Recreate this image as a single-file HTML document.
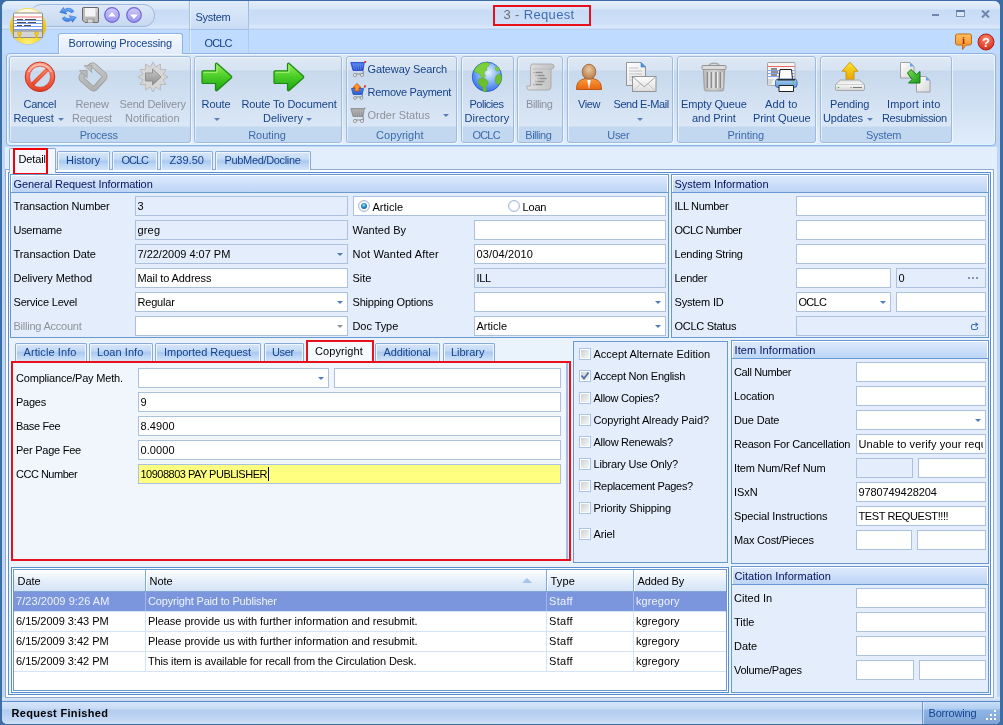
<!DOCTYPE html><html><head><meta charset="utf-8"><title>3 - Request</title><style>
*{box-sizing:border-box;margin:0;padding:0}
html,body{width:1003px;height:725px;overflow:hidden}
body{will-change:transform}
body{position:relative;background:#3b6ea5;font-family:"Liberation Sans",sans-serif;font-size:11px;color:#000;line-height:13px}
.a{position:absolute;white-space:nowrap}
.f{position:absolute;height:20px;border:1px solid #abc1de;background:#fff}
.d{background:#e3edfb}
.l{position:absolute;white-space:nowrap;line-height:13px}
.g{color:#8e939b}
.pn{position:absolute;border:1px solid #6a98d0;background:#e3edfb}
.ph{position:absolute;left:0;right:0;top:0;height:17px;border:1px solid #fff;border-bottom:0;background:linear-gradient(#dde9fb,#bcd5f6)}
.phl{position:absolute;left:0;right:0;top:17px;height:1px;background:#6a98d0}
.tb{position:absolute;border:1px solid #8caad6;border-bottom:0;border-radius:2px 2px 0 0;background:linear-gradient(#d9e7f9 0,#c2d9f5 40%,#a9c9f0 52%,#bfd8f6 75%,#d3e4f9 100%);box-shadow:inset 1px 1px 0 #eef5fd,inset -1px 0 0 #eef5fd}
.rg{position:absolute;top:56px;height:87px;border:1px solid #9ebbdf;border-radius:3px;background:linear-gradient(#dfe9f5 0,#d7e3f2 13px,#c8d9ed 14px,#dbe7f6 69px,#c1d8f0 70px,#c1d8f0 100%);box-shadow:inset 1px 1px 0 rgba(255,255,255,.55),1px 1px 0 rgba(255,255,255,.6)}
.rl{position:absolute;color:#3e6aaa;line-height:13px;white-space:nowrap}
.rb{position:absolute;color:#15428b;line-height:13px;white-space:nowrap}
.rbd{color:#8d9299}
.ar{position:absolute;width:0;height:0;border-left:3px solid transparent;border-right:3px solid transparent;border-top:3px solid #5b7fb6}
.cb{position:absolute;width:12px;height:12px;border:1px solid #a9c3e6;background:#fff;padding:1px}
.cb i{display:block;width:8px;height:8px;background:linear-gradient(135deg,#cdd2d9,#f6f6f6)}
.dd{position:absolute;width:0;height:0;border-left:3px solid transparent;border-right:3px solid transparent;border-top:3px solid #4d7ebd}
</style></head><body>
<div class="a" style="left:2px;top:1px;width:998px;height:723px;background:#bfd7f5;border-radius:6px 6px 5px 5px"></div>
<div class="a" style="left:2px;top:1px;width:998px;height:29px;border-radius:6px 6px 0 0;background:linear-gradient(#e6effb 0,#d6e5f8 8px,#c8dcf6 9px,#cddff7 22px,#dbe8fa 27px,#b4d0f2 28px)"></div>
<div class="a" style="left:2px;top:30px;width:998px;height:24px;background:#bfdbff"></div>
<div class="a" style="left:190px;top:1px;width:58px;height:28px;background:linear-gradient(#dfeafa,#c9dcf5)"></div>
<div class="a" style="left:189px;top:1px;width:1px;height:52px;background:linear-gradient(#9ab7de,#b4cff0)"></div>
<div class="a" style="left:248px;top:1px;width:1px;height:52px;background:linear-gradient(#9ab7de,#b4cff0)"></div>
<div class="a" style="left:190px;top:1px;width:1px;height:52px;background:rgba(255,255,255,.5)"></div>
<div class="a" style="left:190px;top:29px;width:58px;height:1px;background:#9fbde6"></div>
<div class="rb" style="left:195.50px;top:11px;letter-spacing:-0.281px">System</div>
<div class="rb" style="left:204.50px;top:37px;letter-spacing:-0.891px">OCLC</div>
<div class="a" style="left:503.50px;top:7px;letter-spacing:0.345px;font-size:13px;color:#3e6db5;line-height:15px"><span style="color:#707070">3 - </span>Request</div>
<div class="a" style="left:493px;top:5px;width:98px;height:21px;border:2px solid #e8101c"></div>
<div class="a" style="left:932px;top:14px;width:7px;height:2px;background:#6f87ad"></div>
<div class="a" style="left:956px;top:10px;width:9px;height:7px;border:1px solid #7a93bb;border-top:2px solid #5f789f;background:#dce8f8"></div>
<svg class="a" style="left:981px;top:10px" width="9" height="8" viewBox="0 0 9 8"><path d="M1 0.500L8 7.500M8 0.500L1 7.500" stroke="#6f87ad" stroke-width="2"/></svg>
<div class="a" style="left:30px;top:4px;width:125px;height:23px;border:1px solid #9fb9de;border-radius:11px;background:linear-gradient(#dde8f7,#c6d8f0)"></div>
<div class="a" style="left:9px;top:7px;width:38px;height:38px;border-radius:50%;background:linear-gradient(#dfe7f3,#b9c7dd)"></div>
<div class="a" style="left:10px;top:8px;width:36px;height:36px;border-radius:50%;background:radial-gradient(circle at 50% 100%,#fff27a 0,#f8d832 30%,#eec000 55%,#f3cf2a 75%,#fbe878 100%)"></div>
<div class="a" style="left:13px;top:9px;width:30px;height:17px;border-radius:15px 15px 9px 9px/13px 13px 5px 5px;background:linear-gradient(rgba(255,255,255,.95),rgba(255,255,255,.25))"></div>
<svg class="a" style="left:12px;top:12px" width="32" height="27" viewBox="0 0 32 27"><path d="M2.500 1h27a1 1 0 011 1v17h-29V2a1 1 0 011-1z" fill="#fdfdfd" stroke="#8d8d8d"/><path d="M2 5h28" stroke="#f07878"/><path d="M2 8.500h28M2 11.500h28M2 14.500h28M2 17.500h28" stroke="#7a9cf0"/><path d="M5 7.500h6M13 7.500h11M5 10.500h9M16 10.500h8M5 13.500h5M12 13.500h7" stroke="#505050" stroke-width="1.200"/><path d="M1.500 19h29v6.500h-29z" fill="#d4d4d4" stroke="#8d8d8d"/><path d="M7.500 26v-4M24.500 26v-4" stroke="#e8b800" stroke-width="2"/><circle cx="7.500" cy="21.500" r="1.800" fill="#f6d020" stroke="#c89800" stroke-width=".5"/><circle cx="24.500" cy="21.500" r="1.800" fill="#f6d020" stroke="#c89800" stroke-width=".5"/></svg>
<svg class="a" style="left:59px;top:6px" width="18" height="18" viewBox="0 0 18 18"><defs><linearGradient id="rf" x1="0" y1="0" x2="0" y2="1"><stop offset="0" stop-color="#7ab8ff"/><stop offset="1" stop-color="#2f78e0"/></linearGradient></defs><path d="M.8 6.300L4.500 1.500l.8 2.200C8.500 1.200 13 2 14.800 5.500l-2.600 1.300C10.800 4.800 8.300 4.600 6.300 6l1.500 2z" fill="url(#rf)" stroke="#2a66c4" stroke-width=".6"/><path d="M17.200 11.200l-3.700 5-.8-2.200c-3.200 2.400-7.700 1.700-9.500-1.800l2.600-1.300c1.400 2 3.900 2.200 5.900.8l-1.500-2z" fill="url(#rf)" stroke="#2a66c4" stroke-width=".6"/></svg>
<svg class="a" style="left:82px;top:7px" width="17" height="16" viewBox="0 0 17 16"><path d="M1.500.500h14a1 1 0 011 1v13a1 1 0 01-1 1H3l-2.500-2.500V1.500a1 1 0 011-1z" fill="#bdbdbd" stroke="#5a5a5a" stroke-width=".9"/><path d="M3 1h10.500v8.500H3z" fill="#f4f4f4"/><path d="M14.200 1.500v3" stroke="#e8e8e8" stroke-width="1"/><path d="M4.500 11.500h8v4h-8z" fill="#9c9c9c"/><path d="M6 12.500h4.500v3H6z" fill="#d8d8d8"/></svg>
<svg class="a" style="left:104px;top:7px" width="16" height="16" viewBox="0 0 16 16"><defs><linearGradient id="pc1" x1="0" y1="0" x2="0" y2="1"><stop offset="0" stop-color="#cfccfa"/><stop offset="1" stop-color="#9a92ea"/></linearGradient></defs><circle cx="8" cy="8" r="7.300" fill="url(#pc1)" stroke="#6e66d6" stroke-width="1.200"/><path d="M4.200 9.600L8 5l3.800 4.600z" fill="#fff"/></svg>
<svg class="a" style="left:126px;top:7px" width="16" height="16" viewBox="0 0 16 16"><defs><linearGradient id="pc0" x1="0" y1="0" x2="0" y2="1"><stop offset="0" stop-color="#cfccfa"/><stop offset="1" stop-color="#9a92ea"/></linearGradient></defs><circle cx="8" cy="8" r="7.300" fill="url(#pc0)" stroke="#6e66d6" stroke-width="1.200"/><path d="M4.200 7.500L8 12.100l3.800-4.600z" fill="#fff"/></svg>
<svg class="a" style="left:955px;top:33px" width="17" height="18" viewBox="0 0 17 18"><path d="M2.500 1h12a2 2 0 012 2v7a2 2 0 01-2 2h-3.500l-3.500 4.500V12h-5a2 2 0 01-2-2V3a2 2 0 012-2z" fill="url(#hg)" stroke="#c46a10"/><defs><linearGradient id="hg" x1="0" y1="0" x2="0" y2="1"><stop offset="0" stop-color="#ffc060"/><stop offset="1" stop-color="#f08a20"/></linearGradient></defs><text x="8.500" y="10.500" font-family="Liberation Serif,serif" font-weight="bold" font-size="11" text-anchor="middle" fill="#a83010">i</text></svg>
<svg class="a" style="left:977px;top:33px" width="18" height="18" viewBox="0 0 18 18"><defs><radialGradient id="qg" cx="50%" cy="30%" r="70%"><stop offset="0" stop-color="#ff8a70"/><stop offset="1" stop-color="#d82a18"/></radialGradient></defs><circle cx="9" cy="9" r="8" fill="url(#qg)" stroke="#b02414"/><text x="9" y="13.500" font-family="Liberation Sans,sans-serif" font-weight="bold" font-size="13" text-anchor="middle" fill="#fff">?</text></svg>
<div class="a" style="left:58px;top:33px;width:125px;height:21px;border:1px solid #8db2e3;border-bottom:0;border-radius:3px 3px 0 0;background:linear-gradient(#f4f8fd,#e1ebf9);box-shadow:inset 1px 1px 0 #fff"></div>
<div class="rb" style="left:68.50px;top:37px;letter-spacing:-0.175px">Borrowing Processing</div>
<div class="a" style="left:6px;top:53px;width:990px;height:93px;border:1px solid #8db2e3;border-radius:4px;background:linear-gradient(#dde8f6 0,#d4e2f3 16px,#c5d8ef 17px,#cfdff3 50px,#e1edfb 100%);box-shadow:inset 0 -1px 0 #dcf6ff,inset 1px 1px 0 #eef5fd,inset -1px 0 0 #eef5fd"></div>
<div class="a" style="left:59px;top:53px;width:123px;height:1px;background:#e1ebf9"></div>
<div class="a" style="left:10px;top:58px;width:58px;height:69px;background:linear-gradient(rgba(225,232,240,.35),rgba(205,214,224,.4) 20%,rgba(222,229,238,.4))"></div>
<div class="rg" style="left:9px;width:182px"></div>
<div class="rl" style="left:79.70px;top:129px;letter-spacing:-0.250px">Process</div>
<div class="rg" style="left:194px;width:148px"></div>
<div class="rl" style="left:248.20px;top:129px;letter-spacing:-0.046px">Routing</div>
<div class="rg" style="left:346px;width:111px"></div>
<div class="rl" style="left:376.10px;top:129px;letter-spacing:0.036px">Copyright</div>
<div class="rg" style="left:461px;width:53px"></div>
<div class="rl" style="left:472.40px;top:129px;letter-spacing:-0.791px">OCLC</div>
<div class="rg" style="left:517px;width:46px"></div>
<div class="rl" style="left:525.30px;top:129px;letter-spacing:-0.480px">Billing</div>
<div class="rg" style="left:567px;width:106px"></div>
<div class="rl" style="left:607.30px;top:129px;letter-spacing:-0.309px">User</div>
<div class="rg" style="left:677px;width:139px"></div>
<div class="rl" style="left:727.55px;top:129px;letter-spacing:-0.100px">Printing</div>
<div class="rg" style="left:820px;width:132px"></div>
<div class="rl" style="left:866.00px;top:129px;letter-spacing:-0.248px">System</div>
<div class="rb" style="left:23.50px;top:98px;letter-spacing:-0.275px">Cancel</div>
<div class="rb" style="left:13.50px;top:112px;letter-spacing:-0.112px">Request</div>
<div class="ar" style="left:58px;top:118px"></div>
<div class="rb rbd" style="left:75.50px;top:98px;letter-spacing:-0.210px">Renew</div>
<div class="rb rbd" style="left:72.00px;top:112px;letter-spacing:-0.141px">Request</div>
<div class="rb rbd" style="left:119.50px;top:98px;letter-spacing:-0.160px">Send Delivery</div>
<div class="rb rbd" style="left:125.00px;top:112px;letter-spacing:0.015px">Notification</div>
<div class="rb" style="left:201.50px;top:98px;letter-spacing:-0.052px">Route</div>
<div class="ar" style="left:214px;top:118px"></div>
<div class="rb" style="left:241.50px;top:98px;letter-spacing:-0.108px">Route To Document</div>
<div class="rb" style="left:263.00px;top:112px;letter-spacing:0.021px">Delivery</div>
<div class="ar" style="left:306px;top:118px"></div>
<div class="rb" style="left:469.50px;top:98px;letter-spacing:-0.501px">Policies</div>
<div class="rb" style="left:464.50px;top:112px;letter-spacing:0.087px">Directory</div>
<div class="rb rbd" style="left:526.00px;top:98px;letter-spacing:-0.408px">Billing</div>
<div class="rb" style="left:578.00px;top:98px;letter-spacing:-0.414px">View</div>
<div class="rb" style="left:613.50px;top:98px;letter-spacing:-0.429px">Send E-Mail</div>
<div class="ar" style="left:637px;top:118px"></div>
<div class="rb" style="left:681.00px;top:98px;letter-spacing:-0.133px">Empty Queue</div>
<div class="rb" style="left:692.00px;top:112px;letter-spacing:-0.026px">and Print</div>
<div class="rb" style="left:765.00px;top:98px;letter-spacing:0.131px">Add to</div>
<div class="rb" style="left:753.00px;top:112px;letter-spacing:-0.118px">Print Queue</div>
<div class="rb" style="left:830.00px;top:98px;letter-spacing:-0.182px">Pending</div>
<div class="rb" style="left:823.00px;top:112px;letter-spacing:-0.155px">Updates</div>
<div class="ar" style="left:867px;top:118px"></div>
<div class="rb" style="left:887.00px;top:98px;letter-spacing:0.130px">Import into</div>
<div class="rb" style="left:882.00px;top:112px;letter-spacing:-0.366px">Resubmission</div>
<div class="rb" style="left:367.50px;top:63px;letter-spacing:-0.123px">Gateway Search</div>
<div class="rb" style="left:367.50px;top:86px;letter-spacing:-0.281px">Remove Payment</div>
<div class="rb rbd" style="left:367.50px;top:109px;letter-spacing:0.003px">Order Status</div>
<div class="ar" style="left:443px;top:114px"></div>
<svg class="a" style="left:24px;top:61px" width="32" height="32" viewBox="0 0 32 32"><defs><linearGradient id="cg" x1="0" y1="0" x2="0" y2="32" gradientUnits="userSpaceOnUse"><stop offset="0" stop-color="#ffa890"/><stop offset=".5" stop-color="#f66a4e"/><stop offset="1" stop-color="#e03820"/></linearGradient></defs><circle cx="16" cy="15.800" r="12.700" fill="none" stroke="url(#cg)" stroke-width="4.400"/><path d="M7.600 24.200L24.400 7.400" stroke="url(#cg)" stroke-width="4.200"/><circle cx="16" cy="15.800" r="14.800" fill="none" stroke="#c22a1a" stroke-width=".9"/><path d="M9.800 23.600A10.500 10.500 0 018.200 22L22.200 8A10.500 10.500 0 0123.800 9.600z" fill="none" stroke="#cc3a28" stroke-width=".6"/><circle cx="16" cy="15.800" r="10.500" fill="none" stroke="#cc3a28" stroke-width=".6"/><path d="M4.500 11A12.700 12.700 0 0127.500 11" fill="none" stroke="#ffd0c0" stroke-width="1.400" opacity=".7"/></svg>
<svg class="a" style="left:76px;top:60px" width="34" height="34" viewBox="0 0 34 34"><defs><linearGradient id="rg1" x1="0" y1="0" x2="34" y2="34" gradientUnits="userSpaceOnUse"><stop offset="0" stop-color="#d2d2d2"/><stop offset="1" stop-color="#a6a6a6"/></linearGradient></defs><g transform="rotate(42 17 17)"><path d="M8 14V10.500A2.500 2.500 0 0110.500 8H23.500A2.500 2.500 0 0126 10.500V23.500A2.500 2.500 0 0123.500 26H10.500A2.500 2.500 0 018 23.500V21" fill="none" stroke="#9a9a9a" stroke-width="5.600" stroke-linejoin="round"/><path d="M8 14V10.500A2.500 2.500 0 0110.500 8H23.500A2.500 2.500 0 0126 10.500V23.500A2.500 2.500 0 0123.500 26H10.500A2.500 2.500 0 018 23.500V21" fill="none" stroke="url(#rg1)" stroke-width="4.200" stroke-linejoin="round"/><path d="M2.800 21.500h10.400L8 15.800z" fill="#b8b8b8" stroke="#9a9a9a" stroke-width=".7"/><path d="M2.800 14.800h10.400L8 9z" fill="#bdbdbd" stroke="#9a9a9a" stroke-width=".7"/><path d="M2.500 15.300h11" stroke="#d3e1f2" stroke-width=".9"/></g></svg>
<svg class="a" style="left:137px;top:61px" width="32" height="32" viewBox="0 0 32 32"><defs><linearGradient id="sg" x1="0" y1="8" x2="0" y2="24" gradientUnits="userSpaceOnUse"><stop offset="0" stop-color="#c8c8c8"/><stop offset="1" stop-color="#8e8e8e"/></linearGradient></defs><polygon points="16.0,1.0 18.7,5.9 23.5,3.0 23.4,8.6 29.0,8.5 26.1,13.3 31.0,16.0 26.1,18.7 29.0,23.5 23.4,23.4 23.5,29.0 18.7,26.1 16.0,31.0 13.3,26.1 8.5,29.0 8.6,23.4 3.0,23.5 5.9,18.7 1.0,16.0 5.9,13.3 3.0,8.5 8.6,8.6 8.5,3.0 13.3,5.9" fill="#d6d6d6" stroke="#b4b4b4" stroke-width=".8"/><path d="M8.500 12h7V8l8.500 8-8.500 8v-4h-7z" fill="url(#sg)" stroke="#8a8a8a" stroke-width=".9"/></svg>
<svg class="a" style="left:201px;top:62px" width="33" height="30" viewBox="0 0 33 30"><defs><linearGradient id="ga0" x1="0" y1="0" x2="0" y2="30" gradientUnits="userSpaceOnUse"><stop offset="0" stop-color="#9cf060"/><stop offset=".45" stop-color="#4fd02a"/><stop offset="1" stop-color="#18a010"/></linearGradient></defs><path d="M2 8.800h12.500V2.200a1 1 0 011.700-.7L30.500 14.300a1 1 0 010 1.400L16.200 28.500a1 1 0 01-1.700-.7V21.500H2a1 1 0 01-1-1V9.800a1 1 0 011-1z" fill="url(#ga0)" stroke="#1c8a12" stroke-width="1.200"/><path d="M2.500 10.300h13.500V3.800" fill="none" stroke="#b8f58a" stroke-width="1" opacity=".8"/></svg>
<svg class="a" style="left:273px;top:62px" width="33" height="30" viewBox="0 0 33 30"><defs><linearGradient id="ga1" x1="0" y1="0" x2="0" y2="30" gradientUnits="userSpaceOnUse"><stop offset="0" stop-color="#9cf060"/><stop offset=".45" stop-color="#4fd02a"/><stop offset="1" stop-color="#18a010"/></linearGradient></defs><path d="M2 8.800h12.500V2.200a1 1 0 011.700-.7L30.500 14.300a1 1 0 010 1.400L16.200 28.500a1 1 0 01-1.700-.7V21.500H2a1 1 0 01-1-1V9.800a1 1 0 011-1z" fill="url(#ga1)" stroke="#1c8a12" stroke-width="1.200"/><path d="M2.500 10.300h13.500V3.800" fill="none" stroke="#b8f58a" stroke-width="1" opacity=".8"/></svg>
<svg class="a" style="left:350px;top:61px" width="17" height="17" viewBox="0 0 17 17"><defs><linearGradient id="ct0" x1="0" y1="0" x2="0" y2="10" gradientUnits="userSpaceOnUse"><stop offset="0" stop-color="#5a8cf0"/><stop offset="1" stop-color="#2040c8"/></linearGradient></defs><path d="M.8 1.500h13.500l-1.300 8H3z" fill="url(#ct0)" stroke="#2040c8" stroke-width=".8"/><path d="M14.300 1.500l1.200-.8M13.300 9.500v3.500H4.500" fill="none" stroke="#8c8c8c" stroke-width="1.100"/><circle cx="5" cy="14" r="1.600" fill="#e6e6e6" stroke="#8c8c8c" stroke-width=".8"/><circle cx="12" cy="14" r="1.600" fill="#e6e6e6" stroke="#8c8c8c" stroke-width=".8"/><path d="M3 4h10M3.300 6h9.400M3.600 8h8.800" stroke="#9cc4ff" stroke-width=".7" stroke-dasharray="1.200 1"/><circle cx="15.300" cy=".9" r="1" fill="#d82818"/></svg>
<svg class="a" style="left:350px;top:83px" width="17" height="17" viewBox="0 0 17 17"><defs><linearGradient id="ct1" x1="0" y1="0" x2="0" y2="12" gradientUnits="userSpaceOnUse"><stop offset="0" stop-color="#6aa8f8"/><stop offset="1" stop-color="#2458d0"/></linearGradient></defs><path d="M1.500 5.500h12l-1.300 6H3.200z" fill="url(#ct1)" stroke="#2050c0" stroke-width=".8"/><path d="M13.500 5.500l1.200-1.500M12.400 11.500v2.500H4.500" fill="none" stroke="#8c8c8c" stroke-width="1.100"/><circle cx="5" cy="15" r="1.400" fill="#e6e6e6" stroke="#8c8c8c" stroke-width=".8"/><circle cx="11.500" cy="15" r="1.400" fill="#e6e6e6" stroke="#8c8c8c" stroke-width=".8"/><path d="M7 .5l4 4H9v3.500H5V4.500H3z" fill="#ff9a20" stroke="#d04810" stroke-width=".8"/><circle cx="15" cy="3.300" r="1.100" fill="#d82818"/></svg>
<svg class="a" style="left:350px;top:107px" width="17" height="17" viewBox="0 0 17 17"><defs><linearGradient id="ct2" x1="0" y1="0" x2="0" y2="10" gradientUnits="userSpaceOnUse"><stop offset="0" stop-color="#b4b4b4"/><stop offset="1" stop-color="#8a8a8a"/></linearGradient></defs><path d="M.8 1.500h13.500l-1.300 8H3z" fill="url(#ct2)" stroke="#8a8a8a" stroke-width=".8"/><path d="M14.300 1.500l1.200-.8M13.300 9.500v3.500H4.500" fill="none" stroke="#8c8c8c" stroke-width="1.100"/><circle cx="5" cy="14" r="1.600" fill="#e6e6e6" stroke="#8c8c8c" stroke-width=".8"/><circle cx="12" cy="14" r="1.600" fill="#e6e6e6" stroke="#8c8c8c" stroke-width=".8"/><path d="M3 4h10M3.300 6h9.400M3.600 8h8.800" stroke="#d0d0d0" stroke-width=".7" stroke-dasharray="1.200 1"/></svg>
<svg class="a" style="left:471px;top:61px" width="32" height="32" viewBox="0 0 32 32"><defs><radialGradient id="gl" cx="55%" cy="35%" r="70%"><stop offset="0" stop-color="#e8f2ff"/><stop offset=".45" stop-color="#8ab8f8"/><stop offset="1" stop-color="#2e6ae0"/></radialGradient></defs><circle cx="16" cy="15.800" r="14.700" fill="url(#gl)" stroke="#2a5fd0" stroke-width=".9"/><path d="M3.500 9C6 4.500 10 2 14.500 1.500l4.500.8-1.500 3-2 1 .5 3-2 .5-1 3 1.500 2.500-1.500 1.500-2.500-.5-2-3.500L6.500 12 4 11z" fill="#7ed03a" stroke="#5cb020" stroke-width=".5"/><path d="M8 18c2-1.500 5-1 7 .500 2 1 2.500 3 1.500 5l-1.500 2 .5 4.800c-1.200.3-2.500.2-3.500-.2L12 26c-2.500-.5-4.500-2.500-4.800-5z" fill="#6cc030" stroke="#54a41c" stroke-width=".5"/><path d="M26.500 5.500l2 3-1.500 2-2.500-1.500-.5-2.500z" fill="#7ed03a" stroke="#5cb020" stroke-width=".5"/><path d="M27 13.500c2-.8 3.200 0 3.600 1.500.2 3-.6 6-2.200 8.500-2 .5-3.500-1-4-3.500-.5-3 .5-5.500 2.600-6.500z" fill="#6cc030" stroke="#54a41c" stroke-width=".5"/></svg>
<svg class="a" style="left:525px;top:63px" width="30" height="28" viewBox="0 0 30 28"><defs><linearGradient id="sc" x1="0" y1="0" x2="30" y2="0" gradientUnits="userSpaceOnUse"><stop offset="0" stop-color="#e4e4e4"/><stop offset=".5" stop-color="#d0d0d0"/><stop offset="1" stop-color="#c0c0c0"/></linearGradient></defs><path d="M7 1h19.500a2.500 2.500 0 010 5H26v18a3 3 0 01-3 3H4.500a2.500 2.500 0 01-2.500-2.500V23h3.500V3.500A2.500 2.500 0 017 1z" fill="url(#sc)" stroke="#a8a8a8" stroke-width=".9"/><path d="M8 6h18" stroke="#b8b8b8" stroke-width=".8"/><path d="M10.500 9.500h7M12.500 12.500h7M14.500 15.500h7M12.500 18.500h7M10.500 21.500h7" stroke="#8e8e8e" stroke-width="1.300"/><path d="M8.500 9.500h1M10.500 12.500h1M12.500 15.500h1M10.500 18.500h1M8.500 21.500h1" stroke="#8e8e8e" stroke-width="1.300"/></svg>
<svg class="a" style="left:575px;top:63px" width="28" height="28" viewBox="0 0 28 28"><defs><linearGradient id="ub" x1="0" y1="14" x2="0" y2="27" gradientUnits="userSpaceOnUse"><stop offset="0" stop-color="#ffa040"/><stop offset="1" stop-color="#e8640c"/></linearGradient><radialGradient id="uh" cx="50%" cy="35%" r="65%"><stop offset="0" stop-color="#e8c89c"/><stop offset="1" stop-color="#b87848"/></radialGradient></defs><path d="M1.500 26.500c0-6 2-9 7-10.500l5.500-1.500 5.500 1.500c5 1.500 7 4.500 7 10.500z" fill="url(#ub)" stroke="#b4500c" stroke-width=".9"/><path d="M12 15.500l2 10 2-10z" fill="#fff" stroke="#c8c8c8" stroke-width=".4"/><ellipse cx="14" cy="8.800" rx="6.800" ry="7.600" fill="url(#uh)" stroke="#9c5c30" stroke-width=".8"/></svg>
<svg class="a" style="left:626px;top:62px" width="31" height="31" viewBox="0 0 31 31"><defs><linearGradient id="dc" x1="0" y1="0" x2="20" y2="24" gradientUnits="userSpaceOnUse"><stop offset="0" stop-color="#fff"/><stop offset="1" stop-color="#e0e0e0"/></linearGradient><linearGradient id="ev" x1="0" y1="14" x2="0" y2="30" gradientUnits="userSpaceOnUse"><stop offset="0" stop-color="#fff"/><stop offset="1" stop-color="#dcdcdc"/></linearGradient></defs><path d="M.5.500h14.500l4.500 4.500v18.500H.5z" fill="url(#dc)" stroke="#8c8c8c" stroke-width=".9"/><path d="M15 .5l4.500 4.500H15z" fill="#4a9af0" stroke="#2a6ac8" stroke-width=".5"/><path d="M3 6h9M3 9h13M3 12h13M3 15h4M3 18h3" stroke="#c4c4c4" stroke-width="1.200"/><rect x="6.500" y="14.500" width="23.500" height="15" fill="url(#ev)" stroke="#8c8c8c" stroke-width=".9"/><path d="M6.800 14.800l11.500 10 11.500-10" fill="none" stroke="#9a9a9a" stroke-width=".9"/><path d="M6.800 29.200l8.500-8M29.700 29.200l-8.500-8" stroke="#c0c0c0" stroke-width=".7"/></svg>
<svg class="a" style="left:701px;top:61px" width="26" height="31" viewBox="0 0 26 31"><defs><linearGradient id="tr" x1="0" y1="0" x2="26" y2="0" gradientUnits="userSpaceOnUse"><stop offset="0" stop-color="#b4b4b4"/><stop offset=".5" stop-color="#d4d4d4"/><stop offset="1" stop-color="#a8a8a8"/></linearGradient></defs><path d="M8 4.500c0-3 10-3 10 0" fill="none" stroke="#a8a8a8" stroke-width="1.300"/><rect x="1" y="4.500" width="24" height="4" rx="1" fill="#dcdcdc" stroke="#8a8a8a" stroke-width=".9"/><path d="M2.300 8.500h21.400l-1 20a1.500 1.500 0 01-1.500 1.400H4.800a1.500 1.500 0 01-1.500-1.400z" fill="url(#tr)" stroke="#9a9a9a" stroke-width=".9"/><path d="M6.500 11v16M10.500 11v16M15 11v16M19.500 11v16" stroke="#8c8c8c" stroke-width="1.600"/><path d="M8 11v16M12 11v16M16.500 11v16M21 11v16" stroke="#f0f0f0" stroke-width="1"/></svg>
<svg class="a" style="left:767px;top:62px" width="31" height="31" viewBox="0 0 31 31"><defs><linearGradient id="pr" x1="0" y1="17" x2="0" y2="26" gradientUnits="userSpaceOnUse"><stop offset="0" stop-color="#a8d0f4"/><stop offset="1" stop-color="#5a94d8"/></linearGradient></defs><path d="M1.500.500h25.500a1 1 0 011 1v21a1 1 0 01-1 1H1.500a1 1 0 01-1-1v-21a1 1 0 011-1z" fill="#f4f4f4" stroke="#9a9a9a" stroke-width=".9"/><path d="M1 4.500h26.500" stroke="#f06a6a" stroke-width="1"/><path d="M1 8.500h26.500M1 11.500h26.500M1 14.500h26.500" stroke="#7a9cf0" stroke-width=".9"/><path d="M4 7h6M4 10h7M4 13h6" stroke="#6a6a6a" stroke-width="1.300"/><path d="M1 17h7c-2.500 1.500-3.500 3.500-3.500 6.500H1z" fill="#d8d8d8"/><path d="M13 7.500h11.500l1 10H12z" fill="#fcfcfc" stroke="#222" stroke-width="1"/><rect x="8.500" y="17" width="21.500" height="8.500" rx="2.500" fill="url(#pr)" stroke="#3a6aa8" stroke-width=".9"/><path d="M10.500 17.800h17.500" stroke="#222" stroke-width="1.400"/><path d="M12 23.500h14.500v6H12z" fill="#fcfcfc" stroke="#222" stroke-width="1"/><circle cx="26.500" cy="20.300" r=".8" fill="#3ad020"/></svg>
<svg class="a" style="left:834px;top:61px" width="32" height="31" viewBox="0 0 32 31"><defs><linearGradient id="ya" x1="0" y1="0" x2="0" y2="19" gradientUnits="userSpaceOnUse"><stop offset="0" stop-color="#ffe830"/><stop offset="1" stop-color="#e8a400"/></linearGradient><linearGradient id="dv" x1="0" y1="19" x2="0" y2="30" gradientUnits="userSpaceOnUse"><stop offset="0" stop-color="#e0e0e0"/><stop offset=".4" stop-color="#fafafa"/><stop offset="1" stop-color="#d0d0d0"/></linearGradient></defs><path d="M16 1.200l8 9h-4v8h-8v-8H8z" fill="url(#ya)" stroke="#c89400" stroke-width=".9" stroke-linejoin="round"/><path d="M6.500 19h19l5 4.500v4.500a1.500 1.500 0 01-1.500 1.500H3a1.500 1.500 0 01-1.500-1.500V23.500z" fill="url(#dv)" stroke="#a4a4a4" stroke-width=".9"/><path d="M1.800 23.500h28.400" stroke="#c4c4c4" stroke-width=".8"/><circle cx="4.500" cy="26.500" r=".8" fill="#3ac020"/><path d="M16.500 26.500h1M19 26.500h9" stroke="#7a7a7a" stroke-width="1"/></svg>
<svg class="a" style="left:899px;top:61px" width="32" height="32" viewBox="0 0 32 32"><defs><linearGradient id="d1" x1="0" y1="0" x2="16" y2="16" gradientUnits="objectBoundingBox"><stop offset="0" stop-color="#fff"/><stop offset=".06" stop-color="#d8d8d8"/></linearGradient><linearGradient id="gi" x1="8" y1="8" x2="21" y2="22" gradientUnits="userSpaceOnUse"><stop offset="0" stop-color="#7ce050"/><stop offset="1" stop-color="#1c9a1c"/></linearGradient></defs><path d="M1.500 1.500h9.500l4 4v11.500H1.500z" fill="url(#d1)" stroke="#9a9a9a" stroke-width=".9"/><path d="M11 1.500l4 4h-4z" fill="#5aa4f0"/><path d="M17.500 15.500h9.500l4 4v11.500H17.500z" fill="url(#d1)" stroke="#9a9a9a" stroke-width=".9"/><path d="M27 15.500l4 4h-4z" fill="#5aa4f0"/><path d="M8.500 12l3.500-3.500 5.500 5 3.500-3v11.500H9.500l3.500-3.500z" fill="url(#gi)" stroke="#14781a" stroke-width="1" stroke-linejoin="round"/></svg>
<div class="a" style="left:5px;top:147px;width:992px;height:554px;background:#e3eefc"></div>
<div class="a" style="left:2px;top:697px;width:998px;height:4px;background:linear-gradient(#e3eefc,#c4d8f3)"></div>
<div class="a" style="left:5px;top:169px;width:989px;height:529px;border:1px solid #93a9cc;background:#fbfdff"></div>
<div class="a" style="left:8px;top:172px;width:983px;height:523px;border:1px solid #5b8ed0;background:#eaf2fc"></div>
<div class="tb" style="left:57px;top:151px;width:53px;height:19px"></div>
<div class="l" style="left:66.00px;top:154px;letter-spacing:-0.005px;color:#15428b">History</div>
<div class="tb" style="left:112px;top:151px;width:46px;height:19px"></div>
<div class="l" style="left:121.50px;top:154px;letter-spacing:-1.000px;color:#15428b">OCLC</div>
<div class="tb" style="left:160px;top:151px;width:53px;height:19px"></div>
<div class="l" style="left:169.50px;top:154px;letter-spacing:0.042px;color:#15428b">Z39.50</div>
<div class="tb" style="left:215px;top:151px;width:96px;height:19px"></div>
<div class="l" style="left:224.50px;top:154px;letter-spacing:-0.337px;color:#15428b">PubMed/Docline</div>
<div class="a" style="left:9px;top:148px;width:47px;height:25px;border:1px solid #8caad6;border-bottom:0;background:#f4f8fe;border-radius:2px 2px 0 0"></div>
<div class="l" style="left:18.50px;top:153px;letter-spacing:-0.121px">Detail</div>
<div class="a" style="left:13px;top:148px;width:35px;height:27px;border:2px solid #f00008"></div>
<div class="pn" style="left:10px;top:174px;width:659px;height:164px"><div class="ph"></div><div class="phl"></div></div>
<div class="l" style="left:13.50px;top:178px;letter-spacing:-0.076px;color:#06125f">General Request Information</div>
<div class="l" style="left:13.50px;top:200px;letter-spacing:-0.181px">Transaction Number</div>
<div class="l" style="left:13.50px;top:224px;letter-spacing:-0.306px">Username</div>
<div class="l" style="left:13.50px;top:248px;letter-spacing:-0.060px">Transaction Date</div>
<div class="l" style="left:13.50px;top:272px;letter-spacing:-0.066px">Delivery Method</div>
<div class="l" style="left:13.50px;top:296px;letter-spacing:-0.188px">Service Level</div>
<div class="l g" style="left:13.50px;top:320px;letter-spacing:-0.236px">Billing Account</div>
<div class="f d" style="left:135px;top:196px;width:213px"></div>
<div class="l" style="left:137.50px;top:200px">3</div>
<div class="f d" style="left:135px;top:220px;width:213px"></div>
<div class="l" style="left:137.50px;top:224px;letter-spacing:0.167px">greg</div>
<div class="f d" style="left:135px;top:244px;width:213px"></div>
<div class="l" style="left:137.50px;top:248px;letter-spacing:-0.010px">7/22/2009 4:07 PM</div>
<div class="dd" style="left:337px;top:253px;border-top-color:#4d7ebd"></div>
<div class="f" style="left:135px;top:268px;width:213px"></div>
<div class="l" style="left:137.50px;top:272px;letter-spacing:-0.094px">Mail to Address</div>
<div class="f" style="left:135px;top:292px;width:213px"></div>
<div class="l" style="left:137.50px;top:296px;letter-spacing:-0.190px">Regular</div>
<div class="dd" style="left:337px;top:301px;border-top-color:#4d7ebd"></div>
<div class="f" style="left:135px;top:316px;width:213px"></div>
<div class="dd" style="left:337px;top:325px;border-top-color:#8e939b"></div>
<div class="f" style="left:353px;top:196px;width:313px"></div>
<div class="a" style="left:358px;top:200px;width:12px;height:12px;border-radius:50%;border:1px solid #a9bbdc;background:radial-gradient(circle at 50% 50%,#fff 55%,#dde6f4 70%,#fff 100%)"></div>
<div class="a" style="left:361px;top:203px;width:6px;height:6px;border-radius:50%;background:radial-gradient(circle at 45% 35%,#b4e8fa 0,#2a8ccc 40%,#0c4c88 100%)"></div>
<div class="l" style="left:372.50px;top:201px;letter-spacing:-0.009px">Article</div>
<div class="a" style="left:508px;top:200px;width:12px;height:12px;border-radius:50%;border:1px solid #a9bbdc;background:radial-gradient(circle at 50% 50%,#fff 55%,#dde6f4 70%,#fff 100%)"></div>
<div class="l" style="left:522.50px;top:201px;letter-spacing:-0.171px">Loan</div>
<div class="l" style="left:352.50px;top:224px;letter-spacing:0.010px">Wanted By</div>
<div class="l" style="left:352.50px;top:248px;letter-spacing:0.184px">Not Wanted After</div>
<div class="l" style="left:352.50px;top:272px;letter-spacing:-0.067px">Site</div>
<div class="l" style="left:352.50px;top:296px;letter-spacing:-0.205px">Shipping Options</div>
<div class="l" style="left:352.50px;top:320px;letter-spacing:-0.073px">Doc Type</div>
<div class="f" style="left:474px;top:220px;width:192px"></div>
<div class="f" style="left:474px;top:244px;width:192px"></div>
<div class="l" style="left:476.50px;top:248px;letter-spacing:0.154px">03/04/2010</div>
<div class="f d" style="left:474px;top:268px;width:192px"></div>
<div class="l" style="left:476.50px;top:272px;letter-spacing:-0.366px">ILL</div>
<div class="f" style="left:474px;top:292px;width:192px"></div>
<div class="dd" style="left:655px;top:301px;border-top-color:#4d7ebd"></div>
<div class="f" style="left:474px;top:316px;width:192px"></div>
<div class="l" style="left:476.50px;top:320px;letter-spacing:-0.009px">Article</div>
<div class="dd" style="left:655px;top:325px;border-top-color:#4d7ebd"></div>
<div class="pn" style="left:671px;top:174px;width:318px;height:164px"><div class="ph"></div><div class="phl"></div></div>
<div class="l" style="left:674.50px;top:178px;letter-spacing:-0.043px;color:#06125f">System Information</div>
<div class="l" style="left:674.50px;top:200px;letter-spacing:-0.336px">ILL Number</div>
<div class="l" style="left:674.50px;top:224px;letter-spacing:-0.541px">OCLC Number</div>
<div class="l" style="left:674.50px;top:248px;letter-spacing:-0.190px">Lending String</div>
<div class="l" style="left:674.50px;top:272px;letter-spacing:-0.278px">Lender</div>
<div class="l" style="left:674.50px;top:296px;letter-spacing:-0.193px">System ID</div>
<div class="l" style="left:674.50px;top:320px;letter-spacing:-0.292px">OCLC Status</div>
<div class="f" style="left:796px;top:196px;width:190px"></div>
<div class="f" style="left:796px;top:220px;width:190px"></div>
<div class="f" style="left:796px;top:244px;width:190px"></div>
<div class="f" style="left:796px;top:268px;width:95px"></div>
<div class="f d" style="left:896px;top:268px;width:90px"></div>
<div class="l" style="left:898.50px;top:272px">0</div>
<div class="a" style="left:968px;top:277px;width:2px;height:2px;background:#8094b4;box-shadow:4px 0 #8094b4,8px 0 #8094b4"></div>
<div class="f" style="left:796px;top:292px;width:95px"></div>
<div class="l" style="left:798.50px;top:296px;letter-spacing:-0.716px">OCLC</div>
<div class="dd" style="left:880px;top:301px;border-top-color:#4d7ebd"></div>
<div class="f" style="left:896px;top:292px;width:90px"></div>
<div class="f d" style="left:796px;top:316px;width:190px"></div>
<svg class="a" style="left:970px;top:321px" width="10" height="10" viewBox="0 0 10 10"><path d="M5.500 3.500H3a1.500 1.500 0 00-1.500 1.500v2A1.500 1.500 0 003 8.500h3A1.500 1.500 0 007.500 7V6" fill="none" stroke="#3a6fc0" stroke-width="1.100"/><path d="M5.500 1l3 2.500-3 2.500z" fill="#3a6fc0"/></svg>
<div class="a" style="left:12px;top:361px;width:556px;height:200px;border:1px solid #a3b9dc;background:#f1f6fd;box-shadow:inset -1px -1px 0 #a9bfe0"></div>
<div class="tb" style="left:15px;top:343px;width:72px;height:18px"></div>
<div class="l" style="left:23.50px;top:346px;letter-spacing:0.086px;color:#15428b">Article Info</div>
<div class="tb" style="left:89px;top:343px;width:64px;height:18px"></div>
<div class="l" style="left:97.00px;top:346px;letter-spacing:0.058px;color:#15428b">Loan Info</div>
<div class="tb" style="left:155px;top:343px;width:106px;height:18px"></div>
<div class="l" style="left:164.00px;top:346px;letter-spacing:-0.021px;color:#15428b">Imported Request</div>
<div class="tb" style="left:264px;top:343px;width:40px;height:18px"></div>
<div class="l" style="left:272.00px;top:346px;letter-spacing:-0.359px;color:#15428b">User</div>
<div class="tb" style="left:375px;top:343px;width:65px;height:18px"></div>
<div class="l" style="left:383.50px;top:346px;letter-spacing:-0.113px;color:#15428b">Additional</div>
<div class="tb" style="left:443px;top:343px;width:52px;height:18px"></div>
<div class="l" style="left:451.00px;top:346px;letter-spacing:-0.032px;color:#15428b">Library</div>
<div class="a" style="left:307px;top:341px;width:66px;height:22px;background:#f6f9fe"></div>
<div class="l" style="left:315.00px;top:345px;letter-spacing:0.091px">Copyright</div>
<div class="a" style="left:306px;top:340px;width:68px;height:23px;border:2px solid #e8101c"></div>
<div class="a" style="left:11px;top:361px;width:560px;height:200px;border:2px solid #e8101c"></div>
<div class="l" style="left:16.00px;top:372px;letter-spacing:-0.194px">Compliance/Pay Meth.</div>
<div class="l" style="left:16.00px;top:396px;letter-spacing:-0.261px">Pages</div>
<div class="l" style="left:16.00px;top:420px;letter-spacing:-0.349px">Base Fee</div>
<div class="l" style="left:16.00px;top:444px;letter-spacing:-0.248px">Per Page Fee</div>
<div class="l" style="left:16.00px;top:468px;letter-spacing:-0.492px">CCC Number</div>
<div class="f" style="left:138px;top:368px;width:191px"></div>
<div class="dd" style="left:318px;top:377px;border-top-color:#4d7ebd"></div>
<div class="f" style="left:334px;top:368px;width:227px"></div>
<div class="f" style="left:138px;top:392px;width:423px"></div>
<div class="l" style="left:140.50px;top:396px">9</div>
<div class="f" style="left:138px;top:416px;width:423px"></div>
<div class="l" style="left:140.50px;top:420px;letter-spacing:0.091px">8.4900</div>
<div class="f" style="left:138px;top:440px;width:423px"></div>
<div class="l" style="left:140.50px;top:444px;letter-spacing:0.091px">0.0000</div>
<div class="f" style="left:138px;top:464px;width:423px;background:#ffff80"></div>
<div class="l" style="left:140.50px;top:468px;letter-spacing:-0.509px">10908803 PAY PUBLISHER</div>
<div class="a" style="left:268px;top:467px;width:1px;height:14px;background:#000"></div>
<div class="a" style="left:573px;top:341px;width:155px;height:222px;border:1px solid #6a98d0;background:#e3edfb"></div>
<div class="cb" style="left:579px;top:348px"><i></i></div>
<div class="l" style="left:593.50px;top:348px;letter-spacing:-0.008px">Accept Alternate Edition</div>
<div class="cb" style="left:579px;top:370px"><i></i></div>
<svg class="a" style="left:580px;top:371px" width="10" height="10" viewBox="0 0 10 10"><path d="M1.500 4.500l2.500 3L8.500 1.500" fill="none" stroke="#5272a6" stroke-width="1.900"/></svg>
<div class="l" style="left:593.50px;top:370px;letter-spacing:-0.239px">Accept Non English</div>
<div class="cb" style="left:579px;top:392px"><i></i></div>
<div class="l" style="left:593.50px;top:392px;letter-spacing:-0.308px">Allow Copies?</div>
<div class="cb" style="left:579px;top:414px"><i></i></div>
<div class="l" style="left:593.50px;top:414px;letter-spacing:-0.114px">Copyright Already Paid?</div>
<div class="cb" style="left:579px;top:436px"><i></i></div>
<div class="l" style="left:593.50px;top:436px;letter-spacing:-0.291px">Allow Renewals?</div>
<div class="cb" style="left:579px;top:458px"><i></i></div>
<div class="l" style="left:593.50px;top:458px;letter-spacing:-0.215px">Library Use Only?</div>
<div class="cb" style="left:579px;top:480px"><i></i></div>
<div class="l" style="left:593.50px;top:480px;letter-spacing:-0.322px">Replacement Pages?</div>
<div class="cb" style="left:579px;top:502px"><i></i></div>
<div class="l" style="left:593.50px;top:502px;letter-spacing:-0.158px">Priority Shipping</div>
<div class="cb" style="left:579px;top:528px"><i></i></div>
<div class="l" style="left:593.50px;top:528px;letter-spacing:-0.123px">Ariel</div>
<div class="pn" style="left:731px;top:340px;width:258px;height:224px"><div class="ph"></div><div class="phl"></div></div>
<div class="l" style="left:734.50px;top:344px;letter-spacing:0.095px;color:#06125f">Item Information</div>
<div class="l" style="left:734.00px;top:366px;letter-spacing:-0.376px">Call Number</div>
<div class="l" style="left:734.00px;top:390px;letter-spacing:-0.162px">Location</div>
<div class="l" style="left:734.00px;top:414px;letter-spacing:-0.148px">Due Date</div>
<div class="l" style="left:734.00px;top:438px;letter-spacing:-0.208px">Reason For Cancellation</div>
<div class="l" style="left:734.00px;top:462px;letter-spacing:-0.165px">Item Num/Ref Num</div>
<div class="l" style="left:734.00px;top:486px;letter-spacing:-0.036px">ISxN</div>
<div class="l" style="left:734.00px;top:510px;letter-spacing:-0.095px">Special Instructions</div>
<div class="l" style="left:734.00px;top:534px;letter-spacing:-0.182px">Max Cost/Pieces</div>
<div class="f" style="left:856px;top:362px;width:130px"></div>
<div class="f" style="left:856px;top:386px;width:130px"></div>
<div class="f" style="left:856px;top:410px;width:130px"></div>
<div class="dd" style="left:975px;top:419px;border-top-color:#4d7ebd"></div>
<div class="f" style="left:856px;top:434px;width:130px"></div>
<div class="l" style="left:858.50px;top:438px;letter-spacing:0.098px;width:124px;overflow:hidden">Unable to verify your requ</div>
<div class="f d" style="left:856px;top:458px;width:57px"></div>
<div class="f" style="left:918px;top:458px;width:68px"></div>
<div class="f" style="left:856px;top:482px;width:130px"></div>
<div class="l" style="left:858.50px;top:486px;letter-spacing:-0.102px">9780749428204</div>
<div class="f" style="left:856px;top:506px;width:130px"></div>
<div class="l" style="left:858.50px;top:510px;letter-spacing:-0.417px">TEST REQUEST!!!!</div>
<div class="f" style="left:856px;top:530px;width:56px"></div>
<div class="f" style="left:917px;top:530px;width:69px"></div>
<div class="pn" style="left:731px;top:566px;width:258px;height:127px"><div class="ph"></div><div class="phl"></div></div>
<div class="l" style="left:734.50px;top:570px;letter-spacing:0.050px;color:#06125f">Citation Information</div>
<div class="l" style="left:734.00px;top:592px;letter-spacing:0.047px">Cited In</div>
<div class="l" style="left:734.00px;top:616px;letter-spacing:0.025px">Title</div>
<div class="l" style="left:734.00px;top:640px;letter-spacing:-0.013px">Date</div>
<div class="l" style="left:734.00px;top:664px;letter-spacing:-0.270px">Volume/Pages</div>
<div class="f" style="left:856px;top:588px;width:130px"></div>
<div class="f" style="left:856px;top:612px;width:130px"></div>
<div class="f" style="left:856px;top:636px;width:130px"></div>
<div class="f" style="left:856px;top:660px;width:58px"></div>
<div class="f" style="left:919px;top:660px;width:67px"></div>
<div class="a" style="left:11px;top:567px;width:718px;height:126px;border:1px solid #5b8ed0;background:#fff"></div>
<div class="a" style="left:13px;top:569px;width:714px;height:122px;border:1px solid #6a98d0"></div>
<div class="a" style="left:14px;top:570px;width:712px;height:22px;background:linear-gradient(#ffffff,#e6effb 50%,#d4e3f7);border-bottom:1px solid #7ea6d8"></div>
<div class="l" style="left:17.50px;top:575px;letter-spacing:-0.062px">Date</div>
<div class="l" style="left:149.50px;top:575px;letter-spacing:-0.062px">Note</div>
<div class="a" style="left:145px;top:570px;width:1px;height:21px;background:#7ea6d8"></div>
<div class="a" style="left:146px;top:570px;width:1px;height:21px;background:#fff"></div>
<div class="a" style="left:145px;top:592px;width:1px;height:80px;background:#d5e3f6"></div>
<div class="l" style="left:550.50px;top:575px;letter-spacing:0.135px">Type</div>
<div class="a" style="left:546px;top:570px;width:1px;height:21px;background:#7ea6d8"></div>
<div class="a" style="left:547px;top:570px;width:1px;height:21px;background:#fff"></div>
<div class="a" style="left:546px;top:592px;width:1px;height:80px;background:#d5e3f6"></div>
<div class="l" style="left:637.50px;top:575px;letter-spacing:-0.125px">Added By</div>
<div class="a" style="left:633px;top:570px;width:1px;height:21px;background:#7ea6d8"></div>
<div class="a" style="left:634px;top:570px;width:1px;height:21px;background:#fff"></div>
<div class="a" style="left:633px;top:592px;width:1px;height:80px;background:#d5e3f6"></div>
<div class="a" style="left:522px;top:578px;width:0;height:0;border-left:5px solid transparent;border-right:5px solid transparent;border-bottom:5px solid #a4c4f0"></div>
<div class="a" style="left:14px;top:592px;width:712px;height:19px;background:#7b96dc"></div>
<div class="a" style="left:14px;top:611px;width:712px;height:1px;background:#d5e3f6"></div>
<div class="a" style="left:145px;top:592px;width:1px;height:19px;background:#a3b6e8"></div>
<div class="a" style="left:546px;top:592px;width:1px;height:19px;background:#a3b6e8"></div>
<div class="a" style="left:633px;top:592px;width:1px;height:19px;background:#a3b6e8"></div>
<div class="l" style="left:16.00px;top:595px;letter-spacing:0.067px;color:#eef2fc">7/23/2009 9:26 AM</div>
<div class="l" style="left:148.00px;top:595px;letter-spacing:-0.167px;color:#eef2fc">Copyright Paid to Publisher</div>
<div class="l" style="left:549.00px;top:595px;letter-spacing:0.312px;color:#eef2fc">Staff</div>
<div class="l" style="left:636.00px;top:595px;letter-spacing:0.113px;color:#eef2fc">kgregory</div>
<div class="a" style="left:14px;top:631px;width:712px;height:1px;background:#d5e3f6"></div>
<div class="l" style="left:16.00px;top:615px;letter-spacing:-0.022px">6/15/2009 3:43 PM</div>
<div class="l" style="left:148.00px;top:615px;letter-spacing:-0.044px">Please provide us with further information and resubmit.</div>
<div class="l" style="left:549.00px;top:615px;letter-spacing:0.312px">Staff</div>
<div class="l" style="left:636.00px;top:615px;letter-spacing:0.113px">kgregory</div>
<div class="a" style="left:14px;top:651px;width:712px;height:1px;background:#d5e3f6"></div>
<div class="l" style="left:16.00px;top:635px;letter-spacing:-0.022px">6/15/2009 3:42 PM</div>
<div class="l" style="left:148.00px;top:635px;letter-spacing:-0.044px">Please provide us with further information and resubmit.</div>
<div class="l" style="left:549.00px;top:635px;letter-spacing:0.312px">Staff</div>
<div class="l" style="left:636.00px;top:635px;letter-spacing:0.113px">kgregory</div>
<div class="a" style="left:14px;top:671px;width:712px;height:1px;background:#d5e3f6"></div>
<div class="l" style="left:16.00px;top:655px;letter-spacing:-0.022px">6/15/2009 3:42 PM</div>
<div class="l" style="left:148.00px;top:655px;letter-spacing:-0.144px">This item is available for recall from the Circulation Desk.</div>
<div class="l" style="left:549.00px;top:655px;letter-spacing:0.312px">Staff</div>
<div class="l" style="left:636.00px;top:655px;letter-spacing:0.113px">kgregory</div>
<div class="a" style="left:2px;top:701px;width:998px;height:23px;border-radius:0 0 5px 5px;background:linear-gradient(#d7e6f9 0,#c6daf4 7px,#b1ccef 8px,#c3d8f4 18px,#d2e2f7 100%);border-top:1px solid #5c8ccc"></div>
<div class="l" style="left:11.50px;top:707px;letter-spacing:0.313px;font-weight:bold">Request Finished</div>
<div class="a" style="left:922px;top:702px;width:1px;height:22px;background:#6a98d0"></div>
<div class="a" style="left:923px;top:702px;width:77px;height:22px;border-radius:0 0 5px 0;background:linear-gradient(#cbdff6 0,#b0cdf0 7px,#8fb5e8 8px,#88aee0 15px,#7ea2d2 100%);box-shadow:inset 1px 0 0 rgba(255,255,255,.5)"></div>
<div class="l" style="left:928.50px;top:707px;letter-spacing:-0.170px;color:#15428b">Borrowing</div>
<div class="a" style="left:994px;top:710px;width:2px;height:2px;background:#fff;box-shadow:-4px 4px #fff,0 4px #fff,-8px 8px #fff,-4px 8px #fff,0 8px #fff"></div>
</body></html>
